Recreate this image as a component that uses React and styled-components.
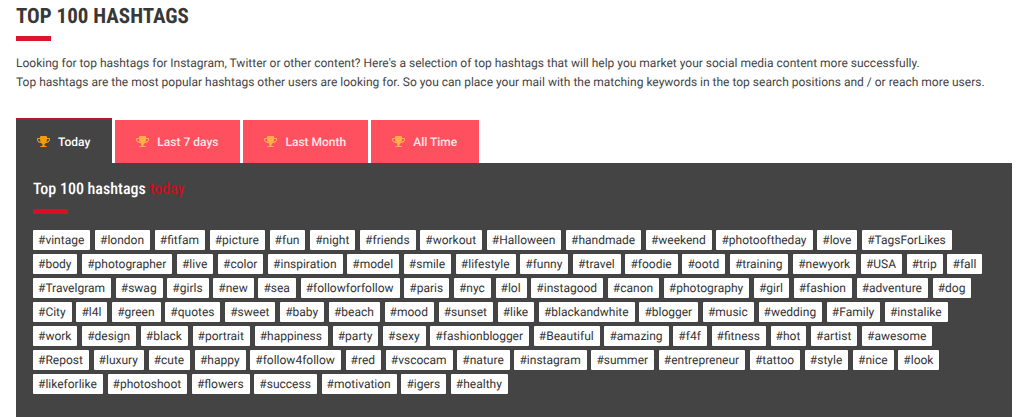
import React, { Fragment, useState } from "react";
import styled, { createGlobalStyle } from "styled-components";

const GlobalStyle = createGlobalStyle`
  *, *::before, *::after { box-sizing: border-box; }
  body {
    margin: 0;
    background: #fff;
    color: #444;
    font-family: Roboto, "Liberation Sans", sans-serif;
    font-size: 12px;
    line-height: 19px;
    text-rendering: geometricPrecision;
  }
`;

const Page = styled.main`
  padding: 5px 12px 0 16px;
`;

const Title = styled.h1`
  margin: 0;
  color: #383838;
  font-family: "Roboto Condensed", "Liberation Sans Narrow", Roboto, sans-serif;
  font-size: 21px;
  font-weight: 700;
  line-height: 24px;
  text-transform: uppercase;
`;

const Rule = styled.div`
  width: 35px;
  height: 5px;
  margin-top: ${(p) => p.$gap}px;
  background: ${(p) => p.$color};
`;

const Intro = styled.p`
  margin: 13px 0 26px;
`;

const Tabs = styled.div`
  display: flex;
  align-items: flex-end;
  gap: 3px;
`;

const Tab = styled.button`
  display: flex;
  align-items: center;
  gap: 8px;
  height: ${(p) => (p.$active ? 45 : 43)}px;
  padding: 0 22px 0 21px;
  border: 0;
  border-top: ${(p) => (p.$active ? "2px solid #b01c2b" : "0")};
  background: ${(p) => (p.$active ? "#444" : "#ff5060")};
  color: ${(p) => (p.$active ? "#fff" : "#ffe6e6")};
  font: 500 12px/20px Roboto, "Liberation Sans", sans-serif;
  text-rendering: inherit;
  cursor: pointer;

  svg {
    width: 13px;
    height: 11px;
    fill: ${(p) => (p.$active ? "#f59c0c" : "#ffb046")};
  }
`;

const Panel = styled.section`
  padding: 15px 26px 19px 17px;
  background: #444;
`;

const PanelTitle = styled.h2`
  margin: 0;
  color: #fff;
  font-family: "Roboto Condensed", "Liberation Sans Narrow", Roboto, sans-serif;
  font-size: 16px;
  font-weight: 500;
  line-height: 22px;

  span { color: #c4101c; }
`;

const TagList = styled.ul`
  margin: 16px 0 0;
  padding: 0;
  font-size: 19px;
  line-height: 24px;
  list-style: none;
`;

const TagItem = styled.li`
  display: inline;
`;

const Tag = styled.a`
  display: inline-block;
  height: 20px;
  padding: 0 6px 0 5px;
  border-radius: 1px;
  background: #fff;
  color: #333;
  font-size: 12px;
  line-height: 20px;
  text-decoration: none;
  vertical-align: top;
`;

const Trophy = () => (
  <svg viewBox="0 128 1664 1408" aria-hidden="true">
    <path d="M458 883q-74-162-74-371h-256v96q0 78 94.500 162t235.500 113zM1536 608v-96h-256q0 209-74 371 141-29 235.500-113t94.500-162zM1664 480v128q0 71-41.500 143t-112 130-173 97.500-215.500 44.500q-42 54-95 95-38 34-52.500 72.500t-14.500 89.500q0 54 30.500 91t97.500 37q75 0 133.500 45.500t58.500 114.500v64q0 14-9 23t-23 9h-832q-14 0-23-9t-9-23v-64q0-69 58.500-114.500t133.500-45.500q67 0 97.500-37t30.500-91q0-51-14.500-89.500t-52.500-72.500q-53-41-95-95-113-5-215.500-44.500t-173-97.500-112-130-41.500-143v-128q0-40 28-68t68-28h288v-96q0-66 47-113t113-47h576q66 0 113 47t47 113v96h288q40 0 68 28t28 68z" />
  </svg>
);

const tabs = ["Today", "Last 7 days", "Last Month", "All Time"];

const tags = `vintage london fitfam picture fun night friends workout Halloween handmade weekend photooftheday love TagsForLikes
body photographer live color inspiration model smile lifestyle funny travel foodie ootd training newyork USA trip fall
Travelgram swag girls new sea followforfollow paris nyc lol instagood canon photography girl fashion adventure dog
City l4l green quotes sweet baby beach mood sunset like blackandwhite blogger music wedding Family instalike
work design black portrait happiness party sexy fashionblogger Beautiful amazing f4f fitness hot artist awesome
Repost luxury cute happy follow4follow red vscocam nature instagram summer entrepreneur tattoo style nice look
likeforlike photoshoot flowers success motivation igers healthy`.split(/\s+/);

export default function App() {
  const [active, setActive] = useState(0);
  return (
    <>
      <GlobalStyle />
      <Page>
        <Title>Top 100 Hashtags</Title>
        <Rule $gap={7} $color="#d9162b" />
        <Intro>
          Looking for top hashtags for Instagram, Twitter or other content? Here's a selection of top hashtags that will
          help you market your social media content more successfully.
          <br />
          Top hashtags are the most popular hashtags other users are looking for. So you can place your mail with the
          matching keywords in the top search positions and / or reach more users.
        </Intro>
        <Tabs role="tablist">
          {tabs.map((label, i) => (
            <Tab key={label} role="tab" aria-selected={i === active} $active={i === active} onClick={() => setActive(i)}>
              <Trophy />
              {label}
            </Tab>
          ))}
        </Tabs>
        <Panel role="tabpanel">
          <PanelTitle>
            Top 100 hashtags <span>{tabs[active].toLowerCase()}</span>
          </PanelTitle>
          <Rule $gap={9} $color="#dc0f1e" />
          <TagList>
            {tags.map((tag) => (
              <Fragment key={tag}>
                <TagItem>
                  <Tag href={`#${tag}`}>#{tag}</Tag>
                </TagItem>{" "}
              </Fragment>
            ))}
          </TagList>
        </Panel>
      </Page>
    </>
  );
}
